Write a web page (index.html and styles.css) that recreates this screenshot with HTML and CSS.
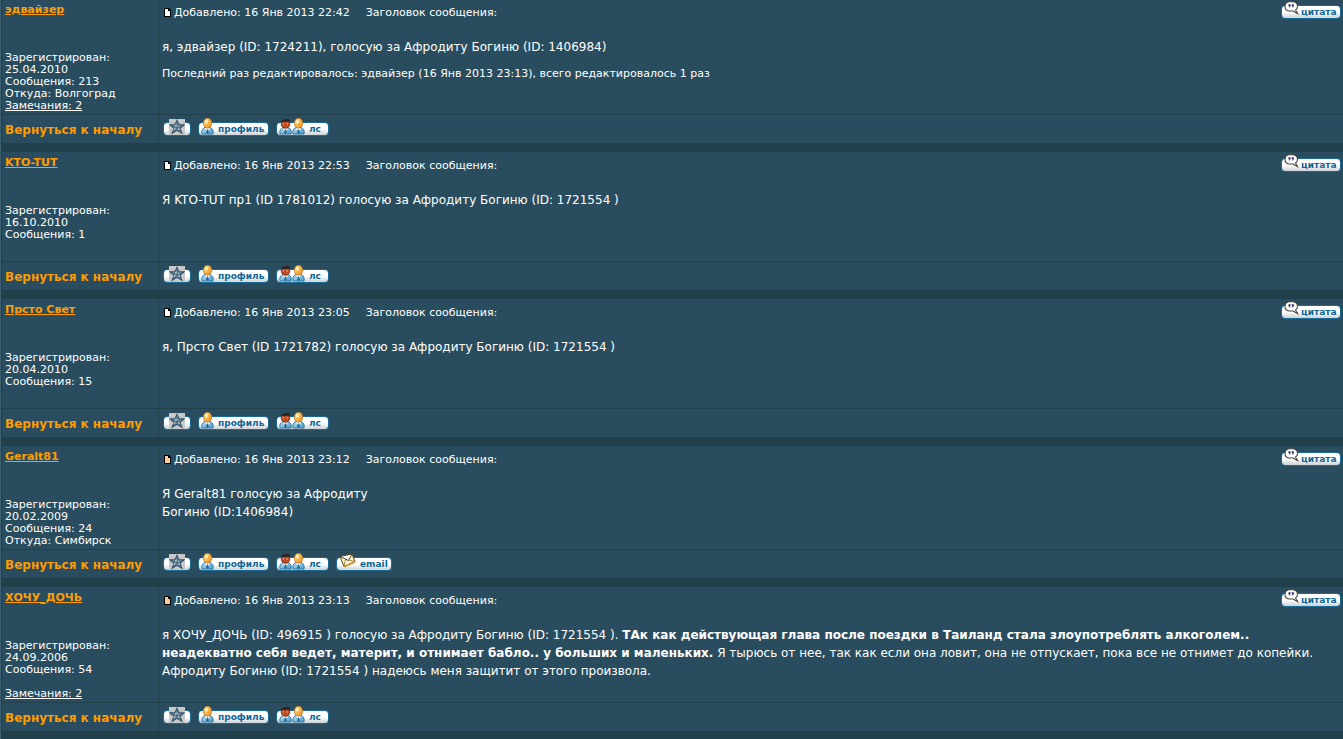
FILE: index.html
```
<!DOCTYPE html>
<html lang="ru">
<head>
  <meta charset="UTF-8" />
  <title>Просмотр темы</title>
  <link rel="stylesheet" href="styles.css">
</head>
<body>
  <svg class="defs" aria-hidden="true">
    <defs>
      <linearGradient id="headFill" x1="0" y1="0" x2="1" y2="1">
        <stop offset="0" stop-color="#ffe08a" />
        <stop offset="1" stop-color="#f08a10" />
      </linearGradient>
      <linearGradient id="darkFill" x1="0" y1="0" x2="1" y2="1">
        <stop offset="0" stop-color="#a85030" />
        <stop offset="1" stop-color="#d04a1c" />
      </linearGradient>
      <linearGradient id="bodyFill" x1="0" y1="0" x2="1" y2="1">
        <stop offset="0" stop-color="#c4e8fa" />
        <stop offset="1" stop-color="#4196c8" />
      </linearGradient>
      <symbol id="page" viewBox="0 0 7 9">
        <path d="M0 0h5l2 2v7H0z" fill="#000" />
        <path d="M1 1h3v2h2v5H1z" fill="currentColor" />
      </symbol>
      <symbol id="body" viewBox="0 0 13 17">
        <path d="M1 16q-1-5 3-6.500h5q4 1.500 3 6.500z" fill="url(#bodyFill)" stroke="#3678a0" />
        <path d="M4 10l2.500 4L9 10z" fill="#fff" />
        <path d="M6 11.500h1l.8 3-1.300 1.500-1.300-1.500z" fill="#17699a" />
      </symbol>
      <symbol id="user" viewBox="0 0 13 17">
        <use href="#body" width="13" height="17" />
        <ellipse cx="6.500" cy="5.200" rx="4.200" ry="5" fill="url(#headFill)" stroke="#b8701c" stroke-width=".7" />
        <ellipse cx="5.500" cy="3.700" rx="1.600" ry="1.900" fill="#fff0b8" />
      </symbol>
      <symbol id="user-dark" viewBox="0 0 13 17">
        <use href="#body" width="13" height="17" />
        <ellipse cx="6.500" cy="6" rx="4.300" ry="4.300" fill="url(#darkFill)" stroke="#5a2416" stroke-width=".8" />
        <path d="M2 4q1-3 4-2.500L9.500 1q2 1 1.500 3.500L9 3.700 5 4z" fill="#2c2422" />
        <path d="M3.500 6h1.500M7.500 6H9" stroke="#ffb080" />
      </symbol>
      <symbol id="star" viewBox="0 0 16 16">
        <path d="M0 0h16v16H0z" fill="#c3c5c6" />
        <path d="M0 2h16M0 6h16M0 10h16M0 14h16" stroke="#d4d4d4" stroke-dasharray="2 1" />
        <path d="M8 1.500l2 4.300h5l-4 3.400 1.700 5L8 11.300l-4.700 2.900 1.700-5-4-3.400h5z" fill="#91a2ae" stroke="#33566d" stroke-width="1.200" />
        <path d="M8 4v5M4 7l4 2 4-2M5.500 12L8 9l2.500 3" fill="none" stroke="#33566d" stroke-width=".8" />
        <path d="M7 5.500v2M9.500 9.500l1 1.500M5.500 9.500L5 11" stroke="#e0e8ec" stroke-width=".9" />
      </symbol>
      <symbol id="bubble" viewBox="0 0 15 14">
        <path d="M5 .8h4q4.500 .7 4.500 4.500 0 2.500-2 3.700l2 3.500-4.500-2.500H5Q1 9.500 1 5.500 1 1.500 5 .8z" fill="#fff" stroke="#4b4336" stroke-width="1.100" />
        <path d="M4.500 3.200h2v2L5 7l.3-1.800h-.8zM7.800 3.200h2v2L8.300 7l.3-1.800h-.8z" fill="#252b64" />
      </symbol>
      <symbol id="mail" viewBox="0 0 17 15">
        <path d="M1 3.500l4 10L16 8.500l-3-7.500z" fill="#fff4cf" stroke="#55411f" />
        <path d="M1 3.500l8.500 4L13 1z" fill="#fff" stroke="#55411f" />
        <path d="M5 13.500l1.500-7M16 8.500L10 7" fill="none" stroke="#a68137" />
        <path d="M5.500 13.700L16 9" stroke="#c89f42" stroke-width="1.500" />
      </symbol>
    </defs>
  </svg>

  <table class="forum">
    <tbody>
      <tr class="post">
        <td class="author">
          <a class="name" href="#">эдвайзер</a>
          <div class="details">Зарегистрирован:<br>25.04.2010<br>Сообщения: 213<br>Откуда: Волгоград<br><a href="#">Замечания: 2</a></div>
        </td>
        <td class="message">
          <div class="head">
            <svg class="page"><use href="#page" /></svg><span class="date">Добавлено: 16 Янв 2013 22:42</span><span>Заголовок сообщения:</span>
            <a class="btn quote" href="#"><svg><use href="#bubble" /></svg>цитата</a>
          </div>
          <div class="text">я, эдвайзер (ID: 1724211), голосую за Афродиту Богиню (ID: 1406984)</div>
          <div class="edited">Последний раз редактировалось: эдвайзер (16 Янв 2013 23:13), всего редактировалось 1 раз</div>
        </td>
      </tr>
      <tr class="foot">
        <td><a class="top" href="#">Вернуться к началу</a></td>
        <td>
          <div class="buttons">
            <a class="btn star" href="#" aria-label="Награды"><svg><use href="#star" /></svg></a>
            <a class="btn profile" href="#"><svg><use href="#user" /></svg>профиль</a>
            <a class="btn pm" href="#"><svg><use href="#user-dark" /></svg><svg class="second"><use href="#user" /></svg>лс</a>
          </div>
        </td>
      </tr>
      <tr class="spacer"><td colspan="2"></td></tr>

      <tr class="post">
        <td class="author">
          <a class="name" href="#">KTO-TUT</a>
          <div class="details extra">Зарегистрирован:<br>16.10.2010<br>Сообщения: 1</div>
        </td>
        <td class="message">
          <div class="head">
            <svg class="page"><use href="#page" /></svg><span class="date">Добавлено: 16 Янв 2013 22:53</span><span>Заголовок сообщения:</span>
            <a class="btn quote" href="#"><svg><use href="#bubble" /></svg>цитата</a>
          </div>
          <div class="text">Я KTO-TUT пр1 (ID 1781012) голосую за Афродиту Богиню (ID: 1721554 )</div>
        </td>
      </tr>
      <tr class="foot">
        <td><a class="top" href="#">Вернуться к началу</a></td>
        <td>
          <div class="buttons">
            <a class="btn star" href="#" aria-label="Награды"><svg><use href="#star" /></svg></a>
            <a class="btn profile" href="#"><svg><use href="#user" /></svg>профиль</a>
            <a class="btn pm" href="#"><svg><use href="#user-dark" /></svg><svg class="second"><use href="#user" /></svg>лс</a>
          </div>
        </td>
      </tr>
      <tr class="spacer"><td colspan="2"></td></tr>

      <tr class="post">
        <td class="author">
          <a class="name" href="#">Прсто Свет</a>
          <div class="details extra">Зарегистрирован:<br>20.04.2010<br>Сообщения: 15</div>
        </td>
        <td class="message">
          <div class="head">
            <svg class="page"><use href="#page" /></svg><span class="date">Добавлено: 16 Янв 2013 23:05</span><span>Заголовок сообщения:</span>
            <a class="btn quote" href="#"><svg><use href="#bubble" /></svg>цитата</a>
          </div>
          <div class="text">я, Прсто Свет (ID 1721782) голосую за Афродиту Богиню (ID: 1721554 )</div>
        </td>
      </tr>
      <tr class="foot">
        <td><a class="top" href="#">Вернуться к началу</a></td>
        <td>
          <div class="buttons">
            <a class="btn star" href="#" aria-label="Награды"><svg><use href="#star" /></svg></a>
            <a class="btn profile" href="#"><svg><use href="#user" /></svg>профиль</a>
            <a class="btn pm" href="#"><svg><use href="#user-dark" /></svg><svg class="second"><use href="#user" /></svg>лс</a>
          </div>
        </td>
      </tr>
      <tr class="spacer"><td colspan="2"></td></tr>

      <tr class="post">
        <td class="author">
          <a class="name" href="#">Geralt81</a>
          <div class="details">Зарегистрирован:<br>20.02.2009<br>Сообщения: 24<br>Откуда: Симбирск</div>
        </td>
        <td class="message">
          <div class="head">
            <svg class="page new"><use href="#page" /></svg><span class="date">Добавлено: 16 Янв 2013 23:12</span><span>Заголовок сообщения:</span>
            <a class="btn quote" href="#"><svg><use href="#bubble" /></svg>цитата</a>
          </div>
          <div class="text">Я Geralt81 голосую за Афродиту<br>Богиню (ID:1406984)</div>
        </td>
      </tr>
      <tr class="foot">
        <td><a class="top" href="#">Вернуться к началу</a></td>
        <td>
          <div class="buttons">
            <a class="btn star" href="#" aria-label="Награды"><svg><use href="#star" /></svg></a>
            <a class="btn profile" href="#"><svg><use href="#user" /></svg>профиль</a>
            <a class="btn pm" href="#"><svg><use href="#user-dark" /></svg><svg class="second"><use href="#user" /></svg>лс</a>
            <a class="btn email" href="#"><svg><use href="#mail" /></svg>email</a>
          </div>
        </td>
      </tr>
      <tr class="spacer"><td colspan="2"></td></tr>

      <tr class="post">
        <td class="author">
          <a class="name" href="#">ХОЧУ_ДОЧЬ</a>
          <div class="details">Зарегистрирован:<br>24.09.2006<br>Сообщения: 54<br><br><a href="#">Замечания: 2</a></div>
        </td>
        <td class="message">
          <div class="head">
            <svg class="page new"><use href="#page" /></svg><span class="date">Добавлено: 16 Янв 2013 23:13</span><span>Заголовок сообщения:</span>
            <a class="btn quote" href="#"><svg><use href="#bubble" /></svg>цитата</a>
          </div>
          <div class="text">я ХОЧУ_ДОЧЬ (ID: 496915 ) голосую за Афродиту Богиню (ID: 1721554 ). <b>ТАк как действующая глава после поездки в Таиланд стала злоупотреблять алкоголем.. неадекватно себя ведет, материт, и отнимает бабло.. у больших и маленьких.</b> Я тырюсь от нее, так как если она ловит, она не отпускает, пока все не отнимет до копейки. Афродиту Богиню (ID: 1721554 ) надеюсь меня защитит от этого произвола.</div>
        </td>
      </tr>
      <tr class="foot">
        <td><a class="top" href="#">Вернуться к началу</a></td>
        <td>
          <div class="buttons">
            <a class="btn star" href="#" aria-label="Награды"><svg><use href="#star" /></svg></a>
            <a class="btn profile" href="#"><svg><use href="#user" /></svg>профиль</a>
            <a class="btn pm" href="#"><svg><use href="#user-dark" /></svg><svg class="second"><use href="#user" /></svg>лс</a>
          </div>
        </td>
      </tr>
      <tr class="spacer"><td colspan="2"></td></tr>
    </tbody>
  </table>
</body>
</html>
```
FILE: styles.css
```
body {
  margin: 0;
  padding-left: 1px;
  background: #3e6070;
  color: #fff;
  font-family: Verdana, "DejaVu Sans", sans-serif;
  font-size: 11px;
  line-height: 12px;
  overflow: hidden;
}
.defs {
  position: absolute;
  width: 0;
  height: 0;
}
.forum {
  width: 100%;
  margin-top: -2px;
  border-spacing: 0;
  table-layout: fixed;
  background: #294d5e;
}
td {
  padding: 0 3px;
  border-top: 1px solid #223f4c;
  border-left: 1px solid #223f4c;
  vertical-align: top;
}
td:first-child {
  width: 150px;
}
.author {
  padding: 3px 3px 2px;
}
.name {
  display: block;
  margin-bottom: 34px;
  color: #ff9c00;
  font-size: 11px;
  font-weight: bold;
  line-height: 16px;
}
.details a {
  color: #fff;
}
.extra {
  padding-bottom: 18px;
}
.message {
  padding: 7px 2px 0 3px;
}
.head {
  display: flex;
  align-items: center;
  height: 14px;
}
.page {
  width: 7px;
  height: 9px;
  margin: 0 3px 2px 2px;
  color: #fff;
}
.page.new {
  color: #ffcc99;
}
.date {
  margin-right: 16px;
}
.text {
  margin-top: 18px;
  font-size: 12px;
  line-height: 18px;
}
.edited {
  margin-top: 12px;
}
.foot td {
  height: 28px;
}
.top {
  display: block;
  color: #ff9c00;
  font-size: 12px;
  font-weight: bold;
  line-height: 30px;
  height: 28px;
  text-decoration: none;
}
.buttons {
  display: flex;
  gap: 7px;
  padding: 7px 0 0 1px;
}
.btn {
  position: relative;
  box-sizing: border-box;
  height: 14px;
  padding-left: 19px;
  border: 1px solid #1b6b94;
  border-radius: 4px;
  background: linear-gradient(#fff 50%, #ccd2d6);
  color: #0f6596;
  font-size: 9px;
  font-weight: bold;
  line-height: 13px;
  text-decoration: none;
}
.btn svg {
  position: absolute;
  left: 2px;
  top: -5px;
  width: 13px;
  height: 17px;
}
.btn.star {
  width: 28px;
}
.btn.star svg {
  left: 5px;
  top: -4px;
  width: 16px;
  height: 16px;
}
.profile {
  width: 71px;
}
.pm {
  width: 53px;
  padding-left: 32px;
}
.pm .second {
  left: 15px;
}
.email {
  width: 56px;
  padding-left: 23px;
}
.btn.email svg {
  width: 17px;
  height: 15px;
}
.quote {
  width: 60px;
  margin: 0 0 2px auto;
}
.btn.quote svg {
  width: 15px;
  height: 14px;
}
.spacer td {
  height: 7px;
  background: #223f4c;
}
```
